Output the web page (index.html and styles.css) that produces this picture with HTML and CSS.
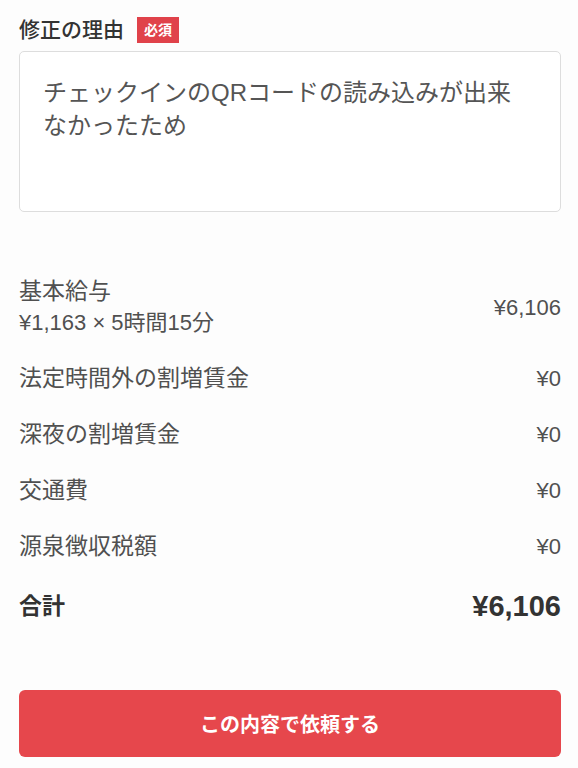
FILE: index.html
```html
<!DOCTYPE html>
<html>
<head>
  <title>修正依頼</title>
  <link rel="stylesheet" href="styles.css">
</head>
<body>
  <div id="contenedor">
    <div class="campo">
      <label class="etiqueta">修正の理由 <span class="obligatorio">必須</span></label>
      <div class="motivo">チェックインのQRコードの読み込みが出来なかったため</div>
    </div>

    <div class="detalle">
      <div class="fila">
        <div>
          <div>基本給与</div>
          <div class="calculo">¥1,163 × 5時間15分</div>
        </div>
        <div class="valor">¥6,106</div>
      </div>
      <div class="fila">
        <div>法定時間外の割増賃金</div>
        <div class="valor">¥0</div>
      </div>
      <div class="fila">
        <div>深夜の割増賃金</div>
        <div class="valor">¥0</div>
      </div>
      <div class="fila">
        <div>交通費</div>
        <div class="valor">¥0</div>
      </div>
      <div class="fila">
        <div>源泉徴収税額</div>
        <div class="valor">¥0</div>
      </div>
      <div class="fila total">
        <div>合計</div>
        <div class="importe">¥6,106</div>
      </div>
    </div>

    <button type="submit">この内容で依頼する</button>
  </div>
</body>
</html>
```

FILE: styles.css
```css
body {
  font-family: "Liberation Sans", "Noto Sans CJK JP", sans-serif;
  margin: 0;
  padding: 0;
  background-color: #fdfdfd;
  color: #505050;
}

#contenedor {
  padding: 17px 17px 0 19px;
}

.etiqueta {
  display: flex;
  align-items: center;
  gap: 13px;
  font-size: 21px;
  line-height: 26px;
  font-weight: 500;
  color: #333;
}

.obligatorio {
  background-color: #e0424a;
  color: white;
  font-size: 14px;
  font-weight: bold;
  line-height: 26px;
  padding: 0 7px;
}

.motivo {
  margin-top: 8px;
  height: 161px;
  padding: 24px 32px 0 23px;
  border: 1px solid #ddd;
  border-radius: 5px;
  box-sizing: border-box;
  background-color: #fff;
  font-size: 24px;
  line-height: 33px;
  color: #555;
}

.detalle {
  margin-top: 64px;
  display: flex;
  flex-direction: column;
  gap: 25px;
}

.fila {
  display: flex;
  justify-content: space-between;
  align-items: center;
  font-size: 23px;
  line-height: 31px;
}

.calculo,
.valor {
  font-size: 22px;
}

.total {
  margin-top: 4px;
  font-weight: bold;
  color: #333;
}

.total .importe {
  font-size: 29px;
}

button[type="submit"] {
  display: block;
  width: 100%;
  height: 67px;
  margin-top: 68px;
  background-color: #e6474c;
  color: white;
  font-family: "Noto Sans CJK JP", sans-serif;
  font-size: 20px;
  font-weight: bold;
  border: none;
  border-radius: 6px;
  cursor: pointer;
}
```
